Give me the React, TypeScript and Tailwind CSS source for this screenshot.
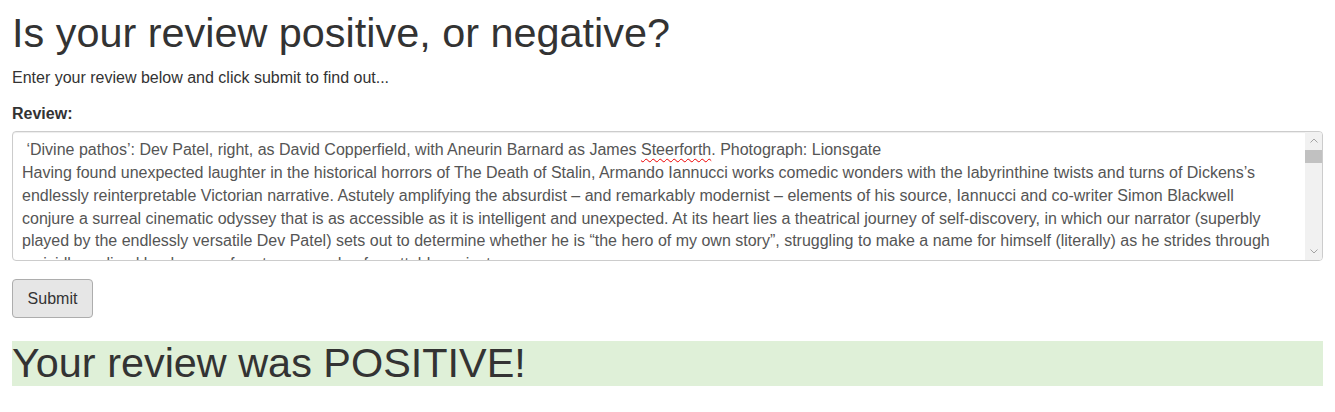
const reviewLines = [
  ' ‘Divine pathos’: Dev Patel, right, as David Copperfield, with Aneurin Barnard as James ',
  'Having found unexpected laughter in the historical horrors of The Death of Stalin, Armando Iannucci works comedic wonders with the labyrinthine twists and turns of Dickens’s',
  'endlessly reinterpretable Victorian narrative. Astutely amplifying the absurdist – and remarkably modernist – elements of his source, Iannucci and co-writer Simon Blackwell',
  'conjure a surreal cinematic odyssey that is as accessible as it is intelligent and unexpected. At its heart lies a theatrical journey of self-discovery, in which our narrator (superbly',
  'played by the endlessly versatile Dev Patel) sets out to determine whether he is “the hero of my own story”, struggling to make a name for himself (literally) as he strides through',
  'a vividly realised landscape of grotesque and unforgettable caricatures.',
]

function Chevron({ up }: { up?: boolean }) {
  return (
    <svg width="8" height="5" viewBox="0 0 8 5" className="block">
      <polyline
        points={up ? '0.5,4.5 4,1 7.5,4.5' : '0.5,0.5 4,4 7.5,0.5'}
        fill="none"
        stroke="#a3a3a3"
        strokeWidth="1"
      />
    </svg>
  )
}

function Scrollbar() {
  return (
    <div className="absolute right-0 top-0 bottom-0 w-[17px] flex flex-col bg-[#f1f1f1]">
      <div className="h-[17px] flex items-center justify-center">
        <Chevron up />
      </div>
      <div className="flex-1 pt-px">
        <div className="h-[13px] bg-[#c1c1c1]" />
      </div>
      <div className="h-[17px] flex items-center justify-center">
        <Chevron />
      </div>
    </div>
  )
}

export default function App() {
  return (
    <div className="min-h-screen bg-white px-[12px] text-[#333] font-['Liberation_Sans',Arial,sans-serif]">
      {/* Heading */}
      <h1 className="pt-[11px] text-[41.4px] leading-[45px] font-normal">
        Is your review positive, or negative?
      </h1>
      <p className="mt-[10px] text-[16px] leading-[23px]">
        Enter your review below and click submit to find out...
      </p>

      {/* Review form */}
      <label className="mt-[13px] block text-[16px] leading-[23px] font-bold">Review:</label>
      <div className="relative mt-[6px] h-[130px] overflow-hidden rounded-[4px] border border-[#ccc] bg-white shadow-[inset_0_1px_1px_rgba(0,0,0,0.075)]">
        <div className="pl-[9px] pr-[26px] pt-[7px] text-[16px] leading-[22.85px] text-[#555] whitespace-pre">
          {reviewLines.map((line, i) => (
            <div key={i}>
              {line}
              {i === 0 && (
                <>
                  <span className="underline decoration-wavy decoration-[#e00] decoration-1 underline-offset-[3px]">
                    Steerforth
                  </span>
                  . Photograph: Lionsgate
                </>
              )}
            </div>
          ))}
        </div>
        <Scrollbar />
      </div>

      <button className="mt-[18px] block w-[81px] h-[39px] rounded-[4px] border border-[#adadad] bg-[#e6e6e6] text-[16px] leading-[23px] text-[#333]">
        Submit
      </button>

      {/* Result */}
      <h1 className="mt-[23px] bg-[#dff0d8] text-[41.4px] leading-[45px] font-normal">
        Your review was POSITIVE!
      </h1>
    </div>
  )
}
